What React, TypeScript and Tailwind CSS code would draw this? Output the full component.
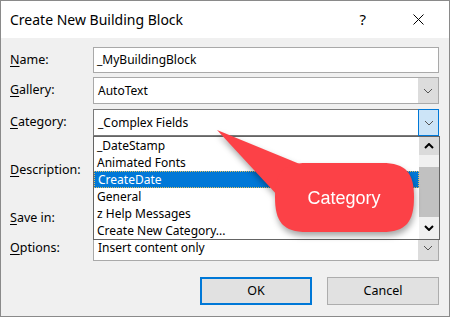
import React from "react";

const font = { fontFamily: '"Segoe UI", "Noto Sans", "Open Sans", sans-serif' };

function Chevron({ bold = false, up = false }: { bold?: boolean; up?: boolean }) {
  return (
    <svg width="10" height="6" viewBox="0 0 10 6" className={up ? "rotate-180" : ""}>
      <path
        d="M1 1 L5 5 L9 1"
        fill="none"
        stroke={bold ? "#000" : "#555"}
        strokeWidth={bold ? 2 : 1}
      />
    </svg>
  );
}

function Label({ u, rest }: { u: string; rest: string }) {
  return (
    <div className="w-[83px] shrink-0 text-[12.5px] text-black">
      <span className="underline underline-offset-2">{u}</span>
      {rest}
    </div>
  );
}

const items = ["_DateStamp", "Animated Fonts", "CreateDate", "General", "z Help Messages", "Create New Category..."];

export default function App() {
  return (
    <div className="relative h-[317px] w-[450px] overflow-hidden border border-[#8a8a8a] bg-[#f0f0f0]" style={font}>
      {/* title bar */}
      <div className="flex h-[37px] items-center bg-white pl-[9px] pr-[25px] text-[14px] text-black">
        <span>Create New Building Block</span>
        <span className="ml-auto mr-[47px] text-[15px]">?</span>
        <svg width="11" height="11" viewBox="0 0 11 11">
          <path d="M0.5 0.5 L10.5 10.5 M10.5 0.5 L0.5 10.5" stroke="#000" strokeWidth="1" />
        </svg>
      </div>

      <div className="flex flex-col pl-[9px] pr-[10px] pt-[9px]">
        {/* Name */}
        <div className="flex h-[26px] items-center">
          <Label u="N" rest="ame:" />
          <div className="flex h-full flex-1 items-center border border-[#a9a9a9] bg-white pl-[3px] text-[12px]">
            _MyBuildingBlock
          </div>
        </div>
        {/* Gallery */}
        <div className="mt-[4px] flex h-[27px] items-center">
          <Label u="G" rest="allery:" />
          <div className="flex h-full flex-1 items-center border border-[#a9a9a9] bg-white pl-[4px] text-[12px]">
            <span className="flex-1">AutoText</span>
            <div className="flex h-full w-[20px] items-center justify-center bg-[#dcdcdc]">
              <Chevron />
            </div>
          </div>
        </div>
        {/* Category */}
        <div className="mt-[5px] flex h-[27px] items-center">
          <Label u="C" rest="ategory:" />
          <div className="flex h-full flex-1 items-center border border-[#7a7a7a] bg-white pl-[4px] text-[12px]">
            <span className="flex-1">_Complex Fields</span>
            <div className="-mr-px flex h-[27px] w-[21px] items-center justify-center border border-[#0078d7] bg-[#cce4f7]">
              <Chevron />
            </div>
          </div>
        </div>
        {/* Description */}
        <div className="mt-[5px] flex h-[59px] items-center">
          <Label u="D" rest="escription:" />
          <div className="h-full flex-1 border border-[#a9a9a9] bg-white" />
        </div>
        {/* Save in */}
        <div className="mt-[5px] flex h-[26px] items-center">
          <Label u="S" rest="ave in:" />
          <div className="h-full flex-1 border border-[#a9a9a9] bg-white" />
        </div>
        {/* Options */}
        <div className="mt-[4px] flex h-[26px] items-center">
          <Label u="O" rest="ptions:" />
          <div className="flex h-full flex-1 items-center border border-[#a9a9a9] bg-white pl-[4px] text-[12px]">
            <span className="flex-1">Insert content only</span>
            <div className="flex h-full w-[20px] items-center justify-center bg-[#dcdcdc]">
              <Chevron />
            </div>
          </div>
        </div>

        {/* buttons */}
        <div className="mt-[16px] flex justify-end gap-[15px]">
          <button className="h-[28px] w-[112px] border-2 border-[#0078d7] bg-[#e1e1e1] text-[12.5px] text-black">OK</button>
          <button className="h-[28px] w-[112px] border border-[#adadad] bg-[#e1e1e1] text-[12.5px] text-black">Cancel</button>
        </div>
      </div>

      {/* open dropdown list */}
      <div className="absolute left-[92px] top-[135px] flex h-[104px] w-[347px] border border-[#646464] bg-white text-[12px]">
        <div className="flex flex-1 flex-col">
          {items.map((it) => (
            <div
              key={it}
              className={`flex h-[17px] items-center whitespace-nowrap pl-[3px] ${
                it === "CreateDate" ? "border border-dotted border-[#e0c060] bg-[#0078d7] text-white" : "text-black"
              }`}
            >
              {it}
            </div>
          ))}
        </div>
        <div className="flex w-[20px] flex-col bg-[#f0f0f0]">
          <div className="flex h-[18px] items-center justify-center bg-[#dadada]">
            <Chevron bold up />
          </div>
          <div className="mt-[12px] h-[50px] bg-[#c1c1c1]" />
          <div className="flex flex-1 items-center justify-center">
            <Chevron bold />
          </div>
        </div>
      </div>

      {/* callout */}
      <svg
        className="absolute left-0 top-0"
        width="450"
        height="317"
        viewBox="0 0 450 317"
        style={{ filter: "drop-shadow(1px 4px 3px rgba(0,0,0,0.35))" }}
      >
        <path d="M216 129 L306 166 L278 196 Z" fill="#fc4147" />
        <path
          d="M306 162 L381 162 C405 162 413 172 413 196 C413 221 405 231 381 231 L306 231 C282 231 274 221 274 196 C274 172 282 162 306 162 Z"
          fill="#fc4147"
        />
        <text
          x="343"
          y="203"
          textAnchor="middle"
          fill="#fff"
          fontSize="18"
          fontFamily='"Liberation Sans", Arial, sans-serif'
        >
          Category
        </text>
      </svg>
    </div>
  );
}
